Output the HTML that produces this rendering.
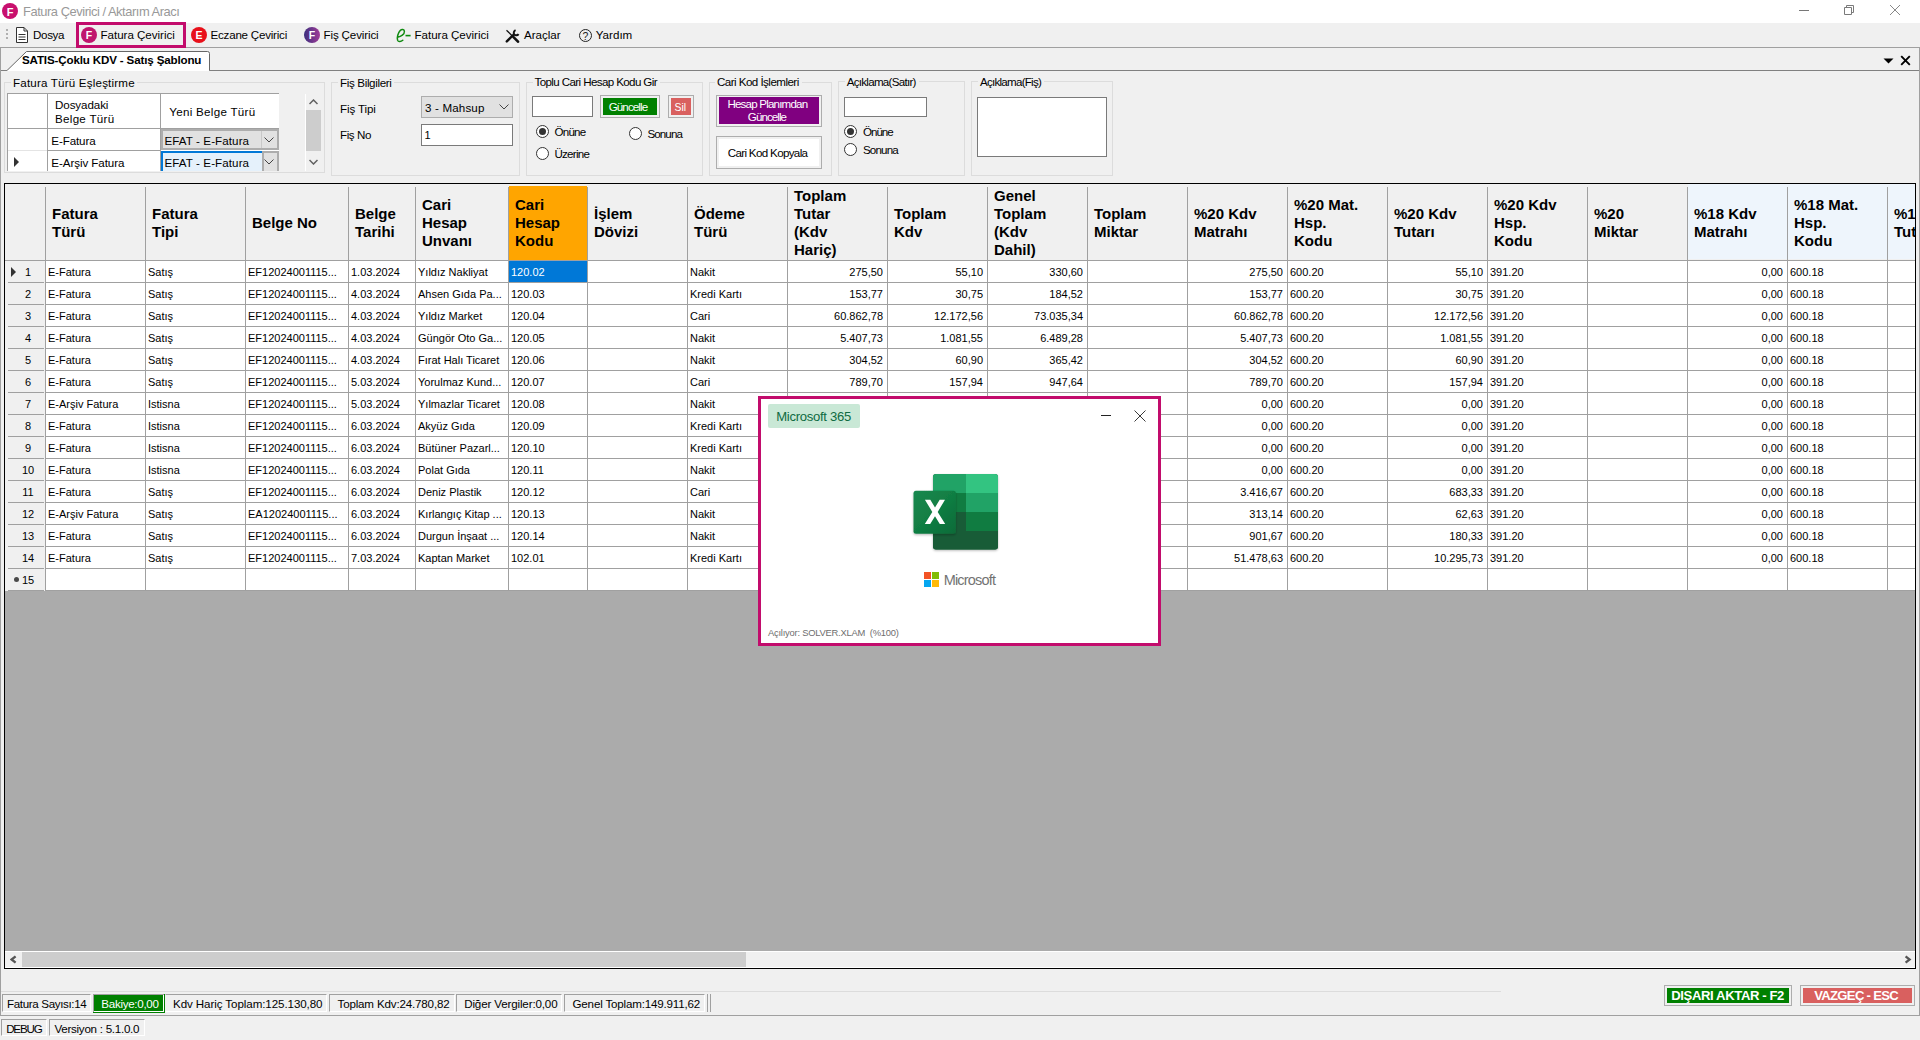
<!DOCTYPE html><html><head><meta charset="utf-8"><style>
*{box-sizing:border-box;margin:0;padding:0}
html,body{width:1920px;height:1040px;overflow:hidden;background:#f0f0f0;font-family:"Liberation Sans",sans-serif;color:#000}
.ab{position:absolute}
.t{position:absolute;white-space:nowrap;line-height:1}
</style></head><body>

<div class="ab" style="left:0px;top:0px;width:1920px;height:23px;background:#fff"></div>
<div class="ab" style="left:2px;top:3px;width:16px;height:16px;border-radius:50%;background:#c8106e"></div>
<div class="t" style="left:6.64px;top:7px;font-size:11.0px;font-weight:700;color:#fff;">F</div>
<div class="t" style="left:23.00px;top:6px;font-size:12.9px;color:#999;letter-spacing:-0.453px;">Fatura Çevirici / Aktarım Aracı</div>
<div class="ab" style="left:1799px;top:10px;width:10px;height:1px;background:#777"></div>
<svg class="ab" style="left:1843px;top:4px" width="13" height="13"><path d="M1.5 3.5H8.5V10.5H1.5Z" fill="none" stroke="#7a7a7a"/><path d="M3.5 3.5V1.5H10.5V8.5H8.5" fill="none" stroke="#7a7a7a"/></svg>
<svg class="ab" style="left:1889px;top:4px" width="12" height="12"><path d="M1 1L11 11M11 1L1 11" stroke="#7a7a7a" stroke-width="0.9"/></svg>
<div class="ab" style="left:0px;top:23px;width:1920px;height:24px;background:#f0f0f0"></div>
<div class="ab" style="left:0px;top:47px;width:1920px;height:1px;background:#a0a0a0"></div>
<div class="ab" style="left:6px;top:29px;width:2px;height:2px;background:#b0b0b0"></div>
<div class="ab" style="left:6px;top:33px;width:2px;height:2px;background:#b0b0b0"></div>
<div class="ab" style="left:6px;top:37px;width:2px;height:2px;background:#b0b0b0"></div>
<svg class="ab" style="left:15px;top:26px" width="14" height="18"><path d="M1.5 1.5H9L12.5 5V16.5H1.5Z" fill="#fff" stroke="#333" stroke-width="1"/><path d="M9 1.5V5H12.5" fill="none" stroke="#333"/><path d="M3.5 8.5H10.5M3.5 11H10.5M3.5 13.5H10.5" stroke="#333"/></svg>
<div class="t" style="left:33.00px;top:29px;font-size:11.6px;letter-spacing:-0.340px;">Dosya</div>
<div class="ab" style="left:76px;top:22px;width:110px;height:26px;border:3px solid #c20c6c"></div>
<div class="ab" style="left:81px;top:27px;width:16px;height:16px;border-radius:50%;background:#c0166e"></div>
<div class="t" style="left:85.79px;top:30px;font-size:10.5px;font-weight:700;color:#fff;">F</div>
<div class="t" style="left:100.50px;top:29px;font-size:11.6px;letter-spacing:-0.032px;">Fatura Çevirici</div>
<div class="ab" style="left:191px;top:27px;width:16px;height:16px;border-radius:50%;background:#e8101a"></div>
<div class="t" style="left:195.50px;top:30px;font-size:10.5px;font-weight:700;color:#fff;">E</div>
<div class="t" style="left:210.50px;top:29px;font-size:11.6px;letter-spacing:-0.224px;">Eczane Çevirici</div>
<div class="ab" style="left:304px;top:27px;width:16px;height:16px;border-radius:50%;background:linear-gradient(90deg,#3c2f7e,#a23c98)"></div>
<div class="t" style="left:308.79px;top:30px;font-size:10.5px;font-weight:700;color:#fff;">F</div>
<div class="t" style="left:323.50px;top:29px;font-size:11.6px;letter-spacing:-0.141px;">Fiş Çevirici</div>
<svg class="ab" style="left:395px;top:28px" width="17" height="15"><path d="M2.6 9.2C6 8.6 9.6 6.4 9.4 3.4C9.2 1.2 6.8 0.9 5.2 2.6C3 4.9 1.7 9.6 2.6 12.3C3.4 14.3 6 13.8 7.8 12.2" fill="none" stroke="#108a10" stroke-width="1.5" stroke-linecap="round"/><path d="M10.5 7.6H15.6" stroke="#108a10" stroke-width="1.6"/></svg>
<div class="t" style="left:414.50px;top:29px;font-size:11.6px;letter-spacing:-0.032px;">Fatura Çevirici</div>
<svg class="ab" style="left:505px;top:29px" width="15" height="14"><path d="M1.5 1.2L7.5 7.2" stroke="#111" stroke-width="1.3"/><path d="M8 7.7L13 12.7" stroke="#111" stroke-width="2.6" stroke-linecap="round"/><path d="M1.8 12.4L8.2 6" stroke="#111" stroke-width="2.4" stroke-linecap="round"/><path d="M10.6 1.2C8.9 1.9 8.2 3.9 9.2 5.4C10.3 6.8 12.4 6.6 13.6 5.1" fill="none" stroke="#111" stroke-width="2"/></svg>
<div class="t" style="left:524.00px;top:29px;font-size:11.6px;letter-spacing:-0.022px;">Araçlar</div>
<div class="ab" style="left:579px;top:29px;width:13px;height:13px;border:1.2px solid #222;border-radius:50%"></div>
<div class="t" style="left:582.38px;top:31px;font-size:10.5px;color:#222;">?</div>
<div class="t" style="left:595.70px;top:29px;font-size:11.6px;letter-spacing:0.017px;">Yardım</div>
<div class="ab" style="left:0px;top:48px;width:1px;height:968px;background:#a0a0a0"></div>
<div class="ab" style="left:1919px;top:48px;width:1px;height:968px;background:#a0a0a0"></div>
<div class="ab" style="left:1px;top:70px;width:1918px;height:1px;background:#808080"></div>
<svg class="ab" style="left:0;top:48px" width="215" height="24"><path d="M7 22.5 L26.5 3.5 H207.5 Q209.5 3.5 209.5 5.5 V22.5" fill="#fff" stroke="#666" stroke-width="1"/><path d="M7.5 22.5 H209" stroke="#fff" stroke-width="1.2"/></svg>
<div class="t" style="left:22.00px;top:54px;font-size:11.6px;font-weight:700;letter-spacing:-0.152px;">SATIS-Çoklu KDV - Satış Şablonu</div>
<svg class="ab" style="left:1883px;top:57px" width="12" height="8"><path d="M0.5 1.5H10.5L5.5 6.5Z" fill="#000"/></svg>
<svg class="ab" style="left:1900px;top:55px" width="11" height="11"><path d="M1.2 1.2L9.8 9.8M9.8 1.2L1.2 9.8" stroke="#000" stroke-width="1.9"/></svg>
<div class="ab" style="left:4px;top:82px;width:321px;height:91px;border:1px solid #dcdcdc"></div>
<div class="ab" style="left:11px;top:77px;width:126px;height:10px;background:#f0f0f0"></div>
<div class="t" style="left:13.00px;top:77px;font-size:11.6px;letter-spacing:0.188px;">Fatura Türü Eşleştirme</div>
<div class="ab" style="left:331px;top:82px;width:189px;height:94px;border:1px solid #dcdcdc"></div>
<div class="ab" style="left:338px;top:77px;width:56px;height:10px;background:#f0f0f0"></div>
<div class="t" style="left:340.00px;top:77px;font-size:11.6px;letter-spacing:-0.351px;">Fiş Bilgileri</div>
<div class="ab" style="left:526px;top:82px;width:177px;height:94px;border:1px solid #dcdcdc"></div>
<div class="ab" style="left:532.5px;top:77px;width:127.5px;height:10px;background:#f0f0f0"></div>
<div class="t" style="left:534.50px;top:76px;font-size:11.6px;letter-spacing:-0.617px;">Toplu Cari Hesap Kodu Gir</div>
<div class="ab" style="left:709px;top:82px;width:123px;height:94px;border:1px solid #dcdcdc"></div>
<div class="ab" style="left:715px;top:77px;width:86.5px;height:10px;background:#f0f0f0"></div>
<div class="t" style="left:717.00px;top:76px;font-size:11.6px;letter-spacing:-0.545px;">Cari Kod İşlemleri</div>
<div class="ab" style="left:838px;top:81px;width:127px;height:95px;border:1px solid #dcdcdc"></div>
<div class="ab" style="left:844.7px;top:76px;width:74px;height:10px;background:#f0f0f0"></div>
<div class="t" style="left:846.70px;top:76px;font-size:11.6px;letter-spacing:-0.723px;">Açıklama(Satır)</div>
<div class="ab" style="left:971px;top:81px;width:142px;height:95px;border:1px solid #dcdcdc"></div>
<div class="ab" style="left:978px;top:76px;width:66px;height:10px;background:#f0f0f0"></div>
<div class="t" style="left:980.00px;top:76px;font-size:11.6px;letter-spacing:-0.755px;">Açıklama(Fiş)</div>
<div class="ab" style="left:7px;top:93px;width:272px;height:78px;background:#fff;border-left:1px solid #a0a0a0;border-top:1px solid #a0a0a0"></div>
<div class="ab" style="left:8px;top:128px;width:271px;height:1px;background:#a0a0a0"></div>
<div class="ab" style="left:47px;top:150px;width:114px;height:1px;background:#a0a0a0"></div>
<div class="ab" style="left:8px;top:150px;width:39px;height:1px;background:#e4e4e4"></div>
<div class="ab" style="left:47px;top:94px;width:1px;height:77px;background:#a0a0a0"></div>
<div class="ab" style="left:160px;top:94px;width:1px;height:77px;background:#a0a0a0"></div>
<div class="t" style="left:55.00px;top:99px;font-size:11.6px;letter-spacing:-0.086px;">Dosyadaki</div>
<div class="t" style="left:55.00px;top:113px;font-size:11.6px;letter-spacing:0.292px;">Belge Türü</div>
<div class="t" style="left:169.20px;top:106px;font-size:11.6px;letter-spacing:0.292px;">Yeni Belge Türü</div>
<div class="t" style="left:51.30px;top:135px;font-size:11.6px;letter-spacing:-0.105px;">E-Fatura</div>
<div class="t" style="left:51.30px;top:157px;font-size:11.6px;letter-spacing:-0.077px;">E-Arşiv Fatura</div>
<svg class="ab" style="left:14px;top:157px" width="6" height="10"><path d="M0 0L5 5L0 10Z" fill="#333"/></svg>
<div class="ab" style="left:161px;top:129px;width:118px;height:21px;background:#e1e1e1;border:2px solid #adadad"></div>
<div class="ab" style="left:261px;top:131px;width:1px;height:17px;background:#c8c8c8"></div>
<div class="t" style="left:164.50px;top:135px;font-size:11.6px;letter-spacing:0.088px;">EFAT - E-Fatura</div>
<svg class="ab" style="left:264px;top:137px" width="10" height="6"><path d="M0.5 0.5L5 5L9.5 0.5" fill="none" stroke="#444" stroke-width="1"/></svg>
<div class="ab" style="left:161px;top:151px;width:101px;height:20px;background:#e5f1fb;border-left:2px solid #0078d7;border-top:2px solid #0078d7"></div>
<div class="ab" style="left:262px;top:151px;width:17px;height:20px;background:#e1e1e1;border-left:2px solid #adadad;border-right:2px solid #adadad;border-top:2px solid #adadad"></div>
<div class="t" style="left:164.50px;top:157px;font-size:11.6px;letter-spacing:0.088px;">EFAT - E-Fatura</div>
<svg class="ab" style="left:264px;top:159px" width="10" height="6"><path d="M0.5 0.5L5 5L9.5 0.5" fill="none" stroke="#444" stroke-width="1"/></svg>
<div class="ab" style="left:305px;top:94px;width:17px;height:77px;background:#f0f0f0;border-left:1px solid #fff"></div>
<div class="ab" style="left:306px;top:110px;width:15px;height:41px;background:#cdcdcd"></div>
<svg class="ab" style="left:309px;top:99px" width="9" height="6"><path d="M0.5 5L4.5 1L8.5 5" fill="none" stroke="#606060" stroke-width="1.5"/></svg>
<svg class="ab" style="left:309px;top:159px" width="9" height="6"><path d="M0.5 1L4.5 5L8.5 1" fill="none" stroke="#606060" stroke-width="1.5"/></svg>
<div class="t" style="left:340.00px;top:103px;font-size:11.6px;letter-spacing:-0.118px;">Fiş Tipi</div>
<div class="t" style="left:340.00px;top:129px;font-size:11.6px;letter-spacing:-0.419px;">Fiş No</div>
<div class="ab" style="left:421px;top:96px;width:92px;height:22px;background:#e1e1e1;border:1px solid #adadad"></div>
<div class="t" style="left:425.00px;top:102px;font-size:11.6px;letter-spacing:0.159px;">3 - Mahsup</div>
<svg class="ab" style="left:499px;top:104px" width="10" height="6"><path d="M0.5 0.5L5 5L9.5 0.5" fill="none" stroke="#444" stroke-width="1"/></svg>
<div class="ab" style="left:421px;top:124px;width:92px;height:22px;background:#fff;border:1px solid #7a7a7a"></div>
<div class="t" style="left:424.60px;top:130px;font-size:11.0px;">1</div>
<div class="ab" style="left:532px;top:96px;width:61px;height:21px;background:#fff;border:1px solid #7a7a7a"></div>
<div class="ab" style="left:600px;top:95px;width:60px;height:23px;background:#f0f0f0;border:1px solid #adadad"></div>
<div class="ab" style="left:603px;top:98px;width:54px;height:17px;background:#008000"></div>
<div class="t" style="left:608.70px;top:101px;font-size:11.6px;color:#fff;letter-spacing:-0.899px;">Güncelle</div>
<div class="ab" style="left:668px;top:95px;width:26px;height:23px;background:#f0f0f0;border:1px solid #adadad"></div>
<div class="ab" style="left:671px;top:98px;width:20px;height:17px;background:#d9605f"></div>
<div class="t" style="left:674.50px;top:103px;font-size:10.4px;color:#fff;">Sil</div>
<div class="ab" style="left:536.0px;top:125.0px;width:13px;height:13px;border-radius:50%;border:1px solid #333;background:#fff"></div>
<div class="ab" style="left:539.0px;top:128.0px;width:7px;height:7px;border-radius:50%;background:#333"></div>
<div class="t" style="left:554.40px;top:126px;font-size:11.6px;letter-spacing:-0.728px;">Önüne</div>
<div class="ab" style="left:629.0px;top:127.0px;width:13px;height:13px;border-radius:50%;border:1px solid #333;background:#fff"></div>
<div class="t" style="left:647.50px;top:128px;font-size:11.6px;letter-spacing:-0.918px;">Sonuna</div>
<div class="ab" style="left:536.0px;top:147.0px;width:13px;height:13px;border-radius:50%;border:1px solid #333;background:#fff"></div>
<div class="t" style="left:554.40px;top:148px;font-size:11.6px;letter-spacing:-0.745px;">Üzerine</div>
<div class="ab" style="left:716px;top:95px;width:106px;height:32px;background:#f0f0f0;border:1px solid #adadad"></div>
<div class="ab" style="left:719px;top:97px;width:100px;height:27px;background:#800080"></div>
<div class="t" style="left:727.40px;top:98px;font-size:11.6px;color:#fff;letter-spacing:-0.817px;">Hesap Planımdan</div>
<div class="t" style="left:747.80px;top:111px;font-size:11.6px;color:#fff;letter-spacing:-0.928px;">Güncelle</div>
<div class="ab" style="left:716px;top:136px;width:106px;height:33px;background:#f0f0f0;border:1px solid #adadad"></div>
<div class="ab" style="left:719px;top:139px;width:100px;height:27px;background:#fff"></div>
<div class="t" style="left:727.70px;top:147px;font-size:11.6px;letter-spacing:-0.660px;">Cari Kod Kopyala</div>
<div class="ab" style="left:844px;top:97px;width:83px;height:20px;background:#fff;border:1px solid #7a7a7a"></div>
<div class="ab" style="left:844.0px;top:125.0px;width:13px;height:13px;border-radius:50%;border:1px solid #333;background:#fff"></div>
<div class="ab" style="left:847.0px;top:128.0px;width:7px;height:7px;border-radius:50%;background:#333"></div>
<div class="t" style="left:862.90px;top:126px;font-size:11.6px;letter-spacing:-0.978px;">Önüne</div>
<div class="ab" style="left:844.0px;top:143.0px;width:13px;height:13px;border-radius:50%;border:1px solid #333;background:#fff"></div>
<div class="t" style="left:862.90px;top:144px;font-size:11.6px;letter-spacing:-0.818px;">Sonuna</div>
<div class="ab" style="left:977px;top:97px;width:130px;height:60px;background:#fff;border:1px solid #7a7a7a"></div>
<div class="ab" style="left:4px;top:183px;width:1912px;height:786px;border:1px solid #000;background:#ababab;overflow:hidden">
<div class="ab" style="left:0;top:0;width:1911px;height:76px;background:#f0f0f0"></div>
<div class="ab" style="left:41px;top:77px;width:1911px;height:330px;background:#fff"></div>
<div class="ab" style="left:0;top:77px;width:40px;height:330px;background:#f0f0f0"></div>
<div class="ab" style="left:504px;top:2px;width:78px;height:74px;background:#ffa500"></div>
<div class="ab" style="left:1683px;top:0;width:300px;height:75px;background:#eef5fc"></div>
<div class="ab" style="left:0;top:76px;width:1911px;height:1px;background:#a0a0a0"></div>
<div class="ab" style="left:40px;top:3px;width:1px;height:404px;background:#a0a0a0"></div>
<div class="ab" style="left:140px;top:3px;width:1px;height:404px;background:#a0a0a0"></div>
<div class="ab" style="left:240px;top:3px;width:1px;height:404px;background:#a0a0a0"></div>
<div class="ab" style="left:343px;top:3px;width:1px;height:404px;background:#a0a0a0"></div>
<div class="ab" style="left:410px;top:3px;width:1px;height:404px;background:#a0a0a0"></div>
<div class="ab" style="left:503px;top:3px;width:1px;height:404px;background:#a0a0a0"></div>
<div class="ab" style="left:582px;top:3px;width:1px;height:404px;background:#a0a0a0"></div>
<div class="ab" style="left:682px;top:3px;width:1px;height:404px;background:#a0a0a0"></div>
<div class="ab" style="left:782px;top:3px;width:1px;height:404px;background:#a0a0a0"></div>
<div class="ab" style="left:882px;top:3px;width:1px;height:404px;background:#a0a0a0"></div>
<div class="ab" style="left:982px;top:3px;width:1px;height:404px;background:#a0a0a0"></div>
<div class="ab" style="left:1082px;top:3px;width:1px;height:404px;background:#a0a0a0"></div>
<div class="ab" style="left:1182px;top:3px;width:1px;height:404px;background:#a0a0a0"></div>
<div class="ab" style="left:1282px;top:3px;width:1px;height:404px;background:#a0a0a0"></div>
<div class="ab" style="left:1382px;top:3px;width:1px;height:404px;background:#a0a0a0"></div>
<div class="ab" style="left:1482px;top:3px;width:1px;height:404px;background:#a0a0a0"></div>
<div class="ab" style="left:1582px;top:3px;width:1px;height:404px;background:#a0a0a0"></div>
<div class="ab" style="left:1682px;top:3px;width:1px;height:404px;background:#a0a0a0"></div>
<div class="ab" style="left:1782px;top:3px;width:1px;height:404px;background:#a0a0a0"></div>
<div class="ab" style="left:1882px;top:3px;width:1px;height:404px;background:#a0a0a0"></div>
<div class="ab" style="left:41px;top:98px;width:1911px;height:1px;background:#a0a0a0"></div>
<div class="ab" style="left:3px;top:98px;width:36px;height:1px;background:#a0a0a0"></div>
<div class="ab" style="left:41px;top:120px;width:1911px;height:1px;background:#a0a0a0"></div>
<div class="ab" style="left:3px;top:120px;width:36px;height:1px;background:#a0a0a0"></div>
<div class="ab" style="left:41px;top:142px;width:1911px;height:1px;background:#a0a0a0"></div>
<div class="ab" style="left:3px;top:142px;width:36px;height:1px;background:#a0a0a0"></div>
<div class="ab" style="left:41px;top:164px;width:1911px;height:1px;background:#a0a0a0"></div>
<div class="ab" style="left:3px;top:164px;width:36px;height:1px;background:#a0a0a0"></div>
<div class="ab" style="left:41px;top:186px;width:1911px;height:1px;background:#a0a0a0"></div>
<div class="ab" style="left:3px;top:186px;width:36px;height:1px;background:#a0a0a0"></div>
<div class="ab" style="left:41px;top:208px;width:1911px;height:1px;background:#a0a0a0"></div>
<div class="ab" style="left:3px;top:208px;width:36px;height:1px;background:#a0a0a0"></div>
<div class="ab" style="left:41px;top:230px;width:1911px;height:1px;background:#a0a0a0"></div>
<div class="ab" style="left:3px;top:230px;width:36px;height:1px;background:#a0a0a0"></div>
<div class="ab" style="left:41px;top:252px;width:1911px;height:1px;background:#a0a0a0"></div>
<div class="ab" style="left:3px;top:252px;width:36px;height:1px;background:#a0a0a0"></div>
<div class="ab" style="left:41px;top:274px;width:1911px;height:1px;background:#a0a0a0"></div>
<div class="ab" style="left:3px;top:274px;width:36px;height:1px;background:#a0a0a0"></div>
<div class="ab" style="left:41px;top:296px;width:1911px;height:1px;background:#a0a0a0"></div>
<div class="ab" style="left:3px;top:296px;width:36px;height:1px;background:#a0a0a0"></div>
<div class="ab" style="left:41px;top:318px;width:1911px;height:1px;background:#a0a0a0"></div>
<div class="ab" style="left:3px;top:318px;width:36px;height:1px;background:#a0a0a0"></div>
<div class="ab" style="left:41px;top:340px;width:1911px;height:1px;background:#a0a0a0"></div>
<div class="ab" style="left:3px;top:340px;width:36px;height:1px;background:#a0a0a0"></div>
<div class="ab" style="left:41px;top:362px;width:1911px;height:1px;background:#a0a0a0"></div>
<div class="ab" style="left:3px;top:362px;width:36px;height:1px;background:#a0a0a0"></div>
<div class="ab" style="left:41px;top:384px;width:1911px;height:1px;background:#a0a0a0"></div>
<div class="ab" style="left:3px;top:384px;width:36px;height:1px;background:#a0a0a0"></div>
<div class="ab" style="left:41px;top:406px;width:1911px;height:1px;background:#a0a0a0"></div>
<div class="ab" style="left:3px;top:406px;width:36px;height:1px;background:#a0a0a0"></div>
<div class="t" style="left:47px;top:21px;font-size:15px;font-weight:700;line-height:18px">Fatura<br>Türü</div>
<div class="t" style="left:147px;top:21px;font-size:15px;font-weight:700;line-height:18px">Fatura<br>Tipi</div>
<div class="t" style="left:247px;top:30px;font-size:15px;font-weight:700;line-height:18px">Belge No</div>
<div class="t" style="left:350px;top:21px;font-size:15px;font-weight:700;line-height:18px">Belge<br>Tarihi</div>
<div class="t" style="left:417px;top:12px;font-size:15px;font-weight:700;line-height:18px">Cari<br>Hesap<br>Unvanı</div>
<div class="t" style="left:510px;top:12px;font-size:15px;font-weight:700;line-height:18px">Cari<br>Hesap<br>Kodu</div>
<div class="t" style="left:589px;top:21px;font-size:15px;font-weight:700;line-height:18px">İşlem<br>Dövizi</div>
<div class="t" style="left:689px;top:21px;font-size:15px;font-weight:700;line-height:18px">Ödeme<br>Türü</div>
<div class="t" style="left:789px;top:3px;font-size:15px;font-weight:700;line-height:18px">Toplam<br>Tutar<br>(Kdv<br>Hariç)</div>
<div class="t" style="left:889px;top:21px;font-size:15px;font-weight:700;line-height:18px">Toplam<br>Kdv</div>
<div class="t" style="left:989px;top:3px;font-size:15px;font-weight:700;line-height:18px">Genel<br>Toplam<br>(Kdv<br>Dahil)</div>
<div class="t" style="left:1089px;top:21px;font-size:15px;font-weight:700;line-height:18px">Toplam<br>Miktar</div>
<div class="t" style="left:1189px;top:21px;font-size:15px;font-weight:700;line-height:18px">%20 Kdv<br>Matrahı</div>
<div class="t" style="left:1289px;top:12px;font-size:15px;font-weight:700;line-height:18px">%20 Mat.<br>Hsp.<br>Kodu</div>
<div class="t" style="left:1389px;top:21px;font-size:15px;font-weight:700;line-height:18px">%20 Kdv<br>Tutarı</div>
<div class="t" style="left:1489px;top:12px;font-size:15px;font-weight:700;line-height:18px">%20 Kdv<br>Hsp.<br>Kodu</div>
<div class="t" style="left:1589px;top:21px;font-size:15px;font-weight:700;line-height:18px">%20<br>Miktar</div>
<div class="t" style="left:1689px;top:21px;font-size:15px;font-weight:700;line-height:18px">%18 Kdv<br>Matrahı</div>
<div class="t" style="left:1789px;top:12px;font-size:15px;font-weight:700;line-height:18px">%18 Mat.<br>Hsp.<br>Kodu</div>
<div class="t" style="left:1889px;top:21px;font-size:15px;font-weight:700;line-height:18px">%18 Kdv<br>Tutarı</div>
<div class="ab" style="left:504px;top:77px;width:78px;height:21px;background:#0078d7"></div>
<div class="t" style="left:43px;top:83px;font-size:11px;color:#000">E-Fatura</div>
<div class="t" style="left:143px;top:83px;font-size:11px;color:#000">Satış</div>
<div class="t" style="left:243px;top:83px;font-size:11px;color:#000">EF12024001115...</div>
<div class="t" style="left:346px;top:83px;font-size:11px;color:#000">1.03.2024</div>
<div class="t" style="left:413px;top:83px;font-size:11px;color:#000">Yıldız Nakliyat</div>
<div class="t" style="left:506px;top:83px;font-size:11px;color:#fff">120.02</div>
<div class="t" style="left:685px;top:83px;font-size:11px;color:#000">Nakit</div>
<div class="t" style="left:782px;width:96px;text-align:right;top:83px;font-size:11px;color:#000">275,50</div>
<div class="t" style="left:882px;width:96px;text-align:right;top:83px;font-size:11px;color:#000">55,10</div>
<div class="t" style="left:982px;width:96px;text-align:right;top:83px;font-size:11px;color:#000">330,60</div>
<div class="t" style="left:1182px;width:96px;text-align:right;top:83px;font-size:11px;color:#000">275,50</div>
<div class="t" style="left:1285px;top:83px;font-size:11px;color:#000">600.20</div>
<div class="t" style="left:1382px;width:96px;text-align:right;top:83px;font-size:11px;color:#000">55,10</div>
<div class="t" style="left:1485px;top:83px;font-size:11px;color:#000">391.20</div>
<div class="t" style="left:1682px;width:96px;text-align:right;top:83px;font-size:11px;color:#000">0,00</div>
<div class="t" style="left:1785px;top:83px;font-size:11px;color:#000">600.18</div>
<div class="t" style="left:0px;width:46px;text-align:center;top:83px;font-size:11px">1</div>
<div class="t" style="left:43px;top:105px;font-size:11px;color:#000">E-Fatura</div>
<div class="t" style="left:143px;top:105px;font-size:11px;color:#000">Satış</div>
<div class="t" style="left:243px;top:105px;font-size:11px;color:#000">EF12024001115...</div>
<div class="t" style="left:346px;top:105px;font-size:11px;color:#000">4.03.2024</div>
<div class="t" style="left:413px;top:105px;font-size:11px;color:#000">Ahsen Gıda Pa...</div>
<div class="t" style="left:506px;top:105px;font-size:11px;color:#000">120.03</div>
<div class="t" style="left:685px;top:105px;font-size:11px;color:#000">Kredi Kartı</div>
<div class="t" style="left:782px;width:96px;text-align:right;top:105px;font-size:11px;color:#000">153,77</div>
<div class="t" style="left:882px;width:96px;text-align:right;top:105px;font-size:11px;color:#000">30,75</div>
<div class="t" style="left:982px;width:96px;text-align:right;top:105px;font-size:11px;color:#000">184,52</div>
<div class="t" style="left:1182px;width:96px;text-align:right;top:105px;font-size:11px;color:#000">153,77</div>
<div class="t" style="left:1285px;top:105px;font-size:11px;color:#000">600.20</div>
<div class="t" style="left:1382px;width:96px;text-align:right;top:105px;font-size:11px;color:#000">30,75</div>
<div class="t" style="left:1485px;top:105px;font-size:11px;color:#000">391.20</div>
<div class="t" style="left:1682px;width:96px;text-align:right;top:105px;font-size:11px;color:#000">0,00</div>
<div class="t" style="left:1785px;top:105px;font-size:11px;color:#000">600.18</div>
<div class="t" style="left:0px;width:46px;text-align:center;top:105px;font-size:11px">2</div>
<div class="t" style="left:43px;top:127px;font-size:11px;color:#000">E-Fatura</div>
<div class="t" style="left:143px;top:127px;font-size:11px;color:#000">Satış</div>
<div class="t" style="left:243px;top:127px;font-size:11px;color:#000">EF12024001115...</div>
<div class="t" style="left:346px;top:127px;font-size:11px;color:#000">4.03.2024</div>
<div class="t" style="left:413px;top:127px;font-size:11px;color:#000">Yıldız Market</div>
<div class="t" style="left:506px;top:127px;font-size:11px;color:#000">120.04</div>
<div class="t" style="left:685px;top:127px;font-size:11px;color:#000">Cari</div>
<div class="t" style="left:782px;width:96px;text-align:right;top:127px;font-size:11px;color:#000">60.862,78</div>
<div class="t" style="left:882px;width:96px;text-align:right;top:127px;font-size:11px;color:#000">12.172,56</div>
<div class="t" style="left:982px;width:96px;text-align:right;top:127px;font-size:11px;color:#000">73.035,34</div>
<div class="t" style="left:1182px;width:96px;text-align:right;top:127px;font-size:11px;color:#000">60.862,78</div>
<div class="t" style="left:1285px;top:127px;font-size:11px;color:#000">600.20</div>
<div class="t" style="left:1382px;width:96px;text-align:right;top:127px;font-size:11px;color:#000">12.172,56</div>
<div class="t" style="left:1485px;top:127px;font-size:11px;color:#000">391.20</div>
<div class="t" style="left:1682px;width:96px;text-align:right;top:127px;font-size:11px;color:#000">0,00</div>
<div class="t" style="left:1785px;top:127px;font-size:11px;color:#000">600.18</div>
<div class="t" style="left:0px;width:46px;text-align:center;top:127px;font-size:11px">3</div>
<div class="t" style="left:43px;top:149px;font-size:11px;color:#000">E-Fatura</div>
<div class="t" style="left:143px;top:149px;font-size:11px;color:#000">Satış</div>
<div class="t" style="left:243px;top:149px;font-size:11px;color:#000">EF12024001115...</div>
<div class="t" style="left:346px;top:149px;font-size:11px;color:#000">4.03.2024</div>
<div class="t" style="left:413px;top:149px;font-size:11px;color:#000">Güngör Oto Ga...</div>
<div class="t" style="left:506px;top:149px;font-size:11px;color:#000">120.05</div>
<div class="t" style="left:685px;top:149px;font-size:11px;color:#000">Nakit</div>
<div class="t" style="left:782px;width:96px;text-align:right;top:149px;font-size:11px;color:#000">5.407,73</div>
<div class="t" style="left:882px;width:96px;text-align:right;top:149px;font-size:11px;color:#000">1.081,55</div>
<div class="t" style="left:982px;width:96px;text-align:right;top:149px;font-size:11px;color:#000">6.489,28</div>
<div class="t" style="left:1182px;width:96px;text-align:right;top:149px;font-size:11px;color:#000">5.407,73</div>
<div class="t" style="left:1285px;top:149px;font-size:11px;color:#000">600.20</div>
<div class="t" style="left:1382px;width:96px;text-align:right;top:149px;font-size:11px;color:#000">1.081,55</div>
<div class="t" style="left:1485px;top:149px;font-size:11px;color:#000">391.20</div>
<div class="t" style="left:1682px;width:96px;text-align:right;top:149px;font-size:11px;color:#000">0,00</div>
<div class="t" style="left:1785px;top:149px;font-size:11px;color:#000">600.18</div>
<div class="t" style="left:0px;width:46px;text-align:center;top:149px;font-size:11px">4</div>
<div class="t" style="left:43px;top:171px;font-size:11px;color:#000">E-Fatura</div>
<div class="t" style="left:143px;top:171px;font-size:11px;color:#000">Satış</div>
<div class="t" style="left:243px;top:171px;font-size:11px;color:#000">EF12024001115...</div>
<div class="t" style="left:346px;top:171px;font-size:11px;color:#000">4.03.2024</div>
<div class="t" style="left:413px;top:171px;font-size:11px;color:#000">Fırat Halı Ticaret</div>
<div class="t" style="left:506px;top:171px;font-size:11px;color:#000">120.06</div>
<div class="t" style="left:685px;top:171px;font-size:11px;color:#000">Nakit</div>
<div class="t" style="left:782px;width:96px;text-align:right;top:171px;font-size:11px;color:#000">304,52</div>
<div class="t" style="left:882px;width:96px;text-align:right;top:171px;font-size:11px;color:#000">60,90</div>
<div class="t" style="left:982px;width:96px;text-align:right;top:171px;font-size:11px;color:#000">365,42</div>
<div class="t" style="left:1182px;width:96px;text-align:right;top:171px;font-size:11px;color:#000">304,52</div>
<div class="t" style="left:1285px;top:171px;font-size:11px;color:#000">600.20</div>
<div class="t" style="left:1382px;width:96px;text-align:right;top:171px;font-size:11px;color:#000">60,90</div>
<div class="t" style="left:1485px;top:171px;font-size:11px;color:#000">391.20</div>
<div class="t" style="left:1682px;width:96px;text-align:right;top:171px;font-size:11px;color:#000">0,00</div>
<div class="t" style="left:1785px;top:171px;font-size:11px;color:#000">600.18</div>
<div class="t" style="left:0px;width:46px;text-align:center;top:171px;font-size:11px">5</div>
<div class="t" style="left:43px;top:193px;font-size:11px;color:#000">E-Fatura</div>
<div class="t" style="left:143px;top:193px;font-size:11px;color:#000">Satış</div>
<div class="t" style="left:243px;top:193px;font-size:11px;color:#000">EF12024001115...</div>
<div class="t" style="left:346px;top:193px;font-size:11px;color:#000">5.03.2024</div>
<div class="t" style="left:413px;top:193px;font-size:11px;color:#000">Yorulmaz Kund...</div>
<div class="t" style="left:506px;top:193px;font-size:11px;color:#000">120.07</div>
<div class="t" style="left:685px;top:193px;font-size:11px;color:#000">Cari</div>
<div class="t" style="left:782px;width:96px;text-align:right;top:193px;font-size:11px;color:#000">789,70</div>
<div class="t" style="left:882px;width:96px;text-align:right;top:193px;font-size:11px;color:#000">157,94</div>
<div class="t" style="left:982px;width:96px;text-align:right;top:193px;font-size:11px;color:#000">947,64</div>
<div class="t" style="left:1182px;width:96px;text-align:right;top:193px;font-size:11px;color:#000">789,70</div>
<div class="t" style="left:1285px;top:193px;font-size:11px;color:#000">600.20</div>
<div class="t" style="left:1382px;width:96px;text-align:right;top:193px;font-size:11px;color:#000">157,94</div>
<div class="t" style="left:1485px;top:193px;font-size:11px;color:#000">391.20</div>
<div class="t" style="left:1682px;width:96px;text-align:right;top:193px;font-size:11px;color:#000">0,00</div>
<div class="t" style="left:1785px;top:193px;font-size:11px;color:#000">600.18</div>
<div class="t" style="left:0px;width:46px;text-align:center;top:193px;font-size:11px">6</div>
<div class="t" style="left:43px;top:215px;font-size:11px;color:#000">E-Arşiv Fatura</div>
<div class="t" style="left:143px;top:215px;font-size:11px;color:#000">Istisna</div>
<div class="t" style="left:243px;top:215px;font-size:11px;color:#000">EF12024001115...</div>
<div class="t" style="left:346px;top:215px;font-size:11px;color:#000">5.03.2024</div>
<div class="t" style="left:413px;top:215px;font-size:11px;color:#000">Yılmazlar Ticaret</div>
<div class="t" style="left:506px;top:215px;font-size:11px;color:#000">120.08</div>
<div class="t" style="left:685px;top:215px;font-size:11px;color:#000">Nakit</div>
<div class="t" style="left:782px;width:96px;text-align:right;top:215px;font-size:11px;color:#000">0,00</div>
<div class="t" style="left:882px;width:96px;text-align:right;top:215px;font-size:11px;color:#000">0,00</div>
<div class="t" style="left:982px;width:96px;text-align:right;top:215px;font-size:11px;color:#000">0,00</div>
<div class="t" style="left:1182px;width:96px;text-align:right;top:215px;font-size:11px;color:#000">0,00</div>
<div class="t" style="left:1285px;top:215px;font-size:11px;color:#000">600.20</div>
<div class="t" style="left:1382px;width:96px;text-align:right;top:215px;font-size:11px;color:#000">0,00</div>
<div class="t" style="left:1485px;top:215px;font-size:11px;color:#000">391.20</div>
<div class="t" style="left:1682px;width:96px;text-align:right;top:215px;font-size:11px;color:#000">0,00</div>
<div class="t" style="left:1785px;top:215px;font-size:11px;color:#000">600.18</div>
<div class="t" style="left:0px;width:46px;text-align:center;top:215px;font-size:11px">7</div>
<div class="t" style="left:43px;top:237px;font-size:11px;color:#000">E-Fatura</div>
<div class="t" style="left:143px;top:237px;font-size:11px;color:#000">Istisna</div>
<div class="t" style="left:243px;top:237px;font-size:11px;color:#000">EF12024001115...</div>
<div class="t" style="left:346px;top:237px;font-size:11px;color:#000">6.03.2024</div>
<div class="t" style="left:413px;top:237px;font-size:11px;color:#000">Akyüz Gıda</div>
<div class="t" style="left:506px;top:237px;font-size:11px;color:#000">120.09</div>
<div class="t" style="left:685px;top:237px;font-size:11px;color:#000">Kredi Kartı</div>
<div class="t" style="left:782px;width:96px;text-align:right;top:237px;font-size:11px;color:#000">0,00</div>
<div class="t" style="left:882px;width:96px;text-align:right;top:237px;font-size:11px;color:#000">0,00</div>
<div class="t" style="left:982px;width:96px;text-align:right;top:237px;font-size:11px;color:#000">0,00</div>
<div class="t" style="left:1182px;width:96px;text-align:right;top:237px;font-size:11px;color:#000">0,00</div>
<div class="t" style="left:1285px;top:237px;font-size:11px;color:#000">600.20</div>
<div class="t" style="left:1382px;width:96px;text-align:right;top:237px;font-size:11px;color:#000">0,00</div>
<div class="t" style="left:1485px;top:237px;font-size:11px;color:#000">391.20</div>
<div class="t" style="left:1682px;width:96px;text-align:right;top:237px;font-size:11px;color:#000">0,00</div>
<div class="t" style="left:1785px;top:237px;font-size:11px;color:#000">600.18</div>
<div class="t" style="left:0px;width:46px;text-align:center;top:237px;font-size:11px">8</div>
<div class="t" style="left:43px;top:259px;font-size:11px;color:#000">E-Fatura</div>
<div class="t" style="left:143px;top:259px;font-size:11px;color:#000">Istisna</div>
<div class="t" style="left:243px;top:259px;font-size:11px;color:#000">EF12024001115...</div>
<div class="t" style="left:346px;top:259px;font-size:11px;color:#000">6.03.2024</div>
<div class="t" style="left:413px;top:259px;font-size:11px;color:#000">Bütüner Pazarl...</div>
<div class="t" style="left:506px;top:259px;font-size:11px;color:#000">120.10</div>
<div class="t" style="left:685px;top:259px;font-size:11px;color:#000">Kredi Kartı</div>
<div class="t" style="left:782px;width:96px;text-align:right;top:259px;font-size:11px;color:#000">0,00</div>
<div class="t" style="left:882px;width:96px;text-align:right;top:259px;font-size:11px;color:#000">0,00</div>
<div class="t" style="left:982px;width:96px;text-align:right;top:259px;font-size:11px;color:#000">0,00</div>
<div class="t" style="left:1182px;width:96px;text-align:right;top:259px;font-size:11px;color:#000">0,00</div>
<div class="t" style="left:1285px;top:259px;font-size:11px;color:#000">600.20</div>
<div class="t" style="left:1382px;width:96px;text-align:right;top:259px;font-size:11px;color:#000">0,00</div>
<div class="t" style="left:1485px;top:259px;font-size:11px;color:#000">391.20</div>
<div class="t" style="left:1682px;width:96px;text-align:right;top:259px;font-size:11px;color:#000">0,00</div>
<div class="t" style="left:1785px;top:259px;font-size:11px;color:#000">600.18</div>
<div class="t" style="left:0px;width:46px;text-align:center;top:259px;font-size:11px">9</div>
<div class="t" style="left:43px;top:281px;font-size:11px;color:#000">E-Fatura</div>
<div class="t" style="left:143px;top:281px;font-size:11px;color:#000">Istisna</div>
<div class="t" style="left:243px;top:281px;font-size:11px;color:#000">EF12024001115...</div>
<div class="t" style="left:346px;top:281px;font-size:11px;color:#000">6.03.2024</div>
<div class="t" style="left:413px;top:281px;font-size:11px;color:#000">Polat Gıda</div>
<div class="t" style="left:506px;top:281px;font-size:11px;color:#000">120.11</div>
<div class="t" style="left:685px;top:281px;font-size:11px;color:#000">Nakit</div>
<div class="t" style="left:782px;width:96px;text-align:right;top:281px;font-size:11px;color:#000">0,00</div>
<div class="t" style="left:882px;width:96px;text-align:right;top:281px;font-size:11px;color:#000">0,00</div>
<div class="t" style="left:982px;width:96px;text-align:right;top:281px;font-size:11px;color:#000">0,00</div>
<div class="t" style="left:1182px;width:96px;text-align:right;top:281px;font-size:11px;color:#000">0,00</div>
<div class="t" style="left:1285px;top:281px;font-size:11px;color:#000">600.20</div>
<div class="t" style="left:1382px;width:96px;text-align:right;top:281px;font-size:11px;color:#000">0,00</div>
<div class="t" style="left:1485px;top:281px;font-size:11px;color:#000">391.20</div>
<div class="t" style="left:1682px;width:96px;text-align:right;top:281px;font-size:11px;color:#000">0,00</div>
<div class="t" style="left:1785px;top:281px;font-size:11px;color:#000">600.18</div>
<div class="t" style="left:0px;width:46px;text-align:center;top:281px;font-size:11px">10</div>
<div class="t" style="left:43px;top:303px;font-size:11px;color:#000">E-Fatura</div>
<div class="t" style="left:143px;top:303px;font-size:11px;color:#000">Satış</div>
<div class="t" style="left:243px;top:303px;font-size:11px;color:#000">EF12024001115...</div>
<div class="t" style="left:346px;top:303px;font-size:11px;color:#000">6.03.2024</div>
<div class="t" style="left:413px;top:303px;font-size:11px;color:#000">Deniz Plastik</div>
<div class="t" style="left:506px;top:303px;font-size:11px;color:#000">120.12</div>
<div class="t" style="left:685px;top:303px;font-size:11px;color:#000">Cari</div>
<div class="t" style="left:782px;width:96px;text-align:right;top:303px;font-size:11px;color:#000">3.416,67</div>
<div class="t" style="left:882px;width:96px;text-align:right;top:303px;font-size:11px;color:#000">683,33</div>
<div class="t" style="left:982px;width:96px;text-align:right;top:303px;font-size:11px;color:#000">4.100,00</div>
<div class="t" style="left:1182px;width:96px;text-align:right;top:303px;font-size:11px;color:#000">3.416,67</div>
<div class="t" style="left:1285px;top:303px;font-size:11px;color:#000">600.20</div>
<div class="t" style="left:1382px;width:96px;text-align:right;top:303px;font-size:11px;color:#000">683,33</div>
<div class="t" style="left:1485px;top:303px;font-size:11px;color:#000">391.20</div>
<div class="t" style="left:1682px;width:96px;text-align:right;top:303px;font-size:11px;color:#000">0,00</div>
<div class="t" style="left:1785px;top:303px;font-size:11px;color:#000">600.18</div>
<div class="t" style="left:0px;width:46px;text-align:center;top:303px;font-size:11px">11</div>
<div class="t" style="left:43px;top:325px;font-size:11px;color:#000">E-Arşiv Fatura</div>
<div class="t" style="left:143px;top:325px;font-size:11px;color:#000">Satış</div>
<div class="t" style="left:243px;top:325px;font-size:11px;color:#000">EA12024001115...</div>
<div class="t" style="left:346px;top:325px;font-size:11px;color:#000">6.03.2024</div>
<div class="t" style="left:413px;top:325px;font-size:11px;color:#000">Kırlangıç Kitap ...</div>
<div class="t" style="left:506px;top:325px;font-size:11px;color:#000">120.13</div>
<div class="t" style="left:685px;top:325px;font-size:11px;color:#000">Nakit</div>
<div class="t" style="left:782px;width:96px;text-align:right;top:325px;font-size:11px;color:#000">313,14</div>
<div class="t" style="left:882px;width:96px;text-align:right;top:325px;font-size:11px;color:#000">62,63</div>
<div class="t" style="left:982px;width:96px;text-align:right;top:325px;font-size:11px;color:#000">375,77</div>
<div class="t" style="left:1182px;width:96px;text-align:right;top:325px;font-size:11px;color:#000">313,14</div>
<div class="t" style="left:1285px;top:325px;font-size:11px;color:#000">600.20</div>
<div class="t" style="left:1382px;width:96px;text-align:right;top:325px;font-size:11px;color:#000">62,63</div>
<div class="t" style="left:1485px;top:325px;font-size:11px;color:#000">391.20</div>
<div class="t" style="left:1682px;width:96px;text-align:right;top:325px;font-size:11px;color:#000">0,00</div>
<div class="t" style="left:1785px;top:325px;font-size:11px;color:#000">600.18</div>
<div class="t" style="left:0px;width:46px;text-align:center;top:325px;font-size:11px">12</div>
<div class="t" style="left:43px;top:347px;font-size:11px;color:#000">E-Fatura</div>
<div class="t" style="left:143px;top:347px;font-size:11px;color:#000">Satış</div>
<div class="t" style="left:243px;top:347px;font-size:11px;color:#000">EF12024001115...</div>
<div class="t" style="left:346px;top:347px;font-size:11px;color:#000">6.03.2024</div>
<div class="t" style="left:413px;top:347px;font-size:11px;color:#000">Durgun İnşaat ...</div>
<div class="t" style="left:506px;top:347px;font-size:11px;color:#000">120.14</div>
<div class="t" style="left:685px;top:347px;font-size:11px;color:#000">Nakit</div>
<div class="t" style="left:782px;width:96px;text-align:right;top:347px;font-size:11px;color:#000">901,67</div>
<div class="t" style="left:882px;width:96px;text-align:right;top:347px;font-size:11px;color:#000">180,33</div>
<div class="t" style="left:982px;width:96px;text-align:right;top:347px;font-size:11px;color:#000">1.082,00</div>
<div class="t" style="left:1182px;width:96px;text-align:right;top:347px;font-size:11px;color:#000">901,67</div>
<div class="t" style="left:1285px;top:347px;font-size:11px;color:#000">600.20</div>
<div class="t" style="left:1382px;width:96px;text-align:right;top:347px;font-size:11px;color:#000">180,33</div>
<div class="t" style="left:1485px;top:347px;font-size:11px;color:#000">391.20</div>
<div class="t" style="left:1682px;width:96px;text-align:right;top:347px;font-size:11px;color:#000">0,00</div>
<div class="t" style="left:1785px;top:347px;font-size:11px;color:#000">600.18</div>
<div class="t" style="left:0px;width:46px;text-align:center;top:347px;font-size:11px">13</div>
<div class="t" style="left:43px;top:369px;font-size:11px;color:#000">E-Fatura</div>
<div class="t" style="left:143px;top:369px;font-size:11px;color:#000">Satış</div>
<div class="t" style="left:243px;top:369px;font-size:11px;color:#000">EF12024001115...</div>
<div class="t" style="left:346px;top:369px;font-size:11px;color:#000">7.03.2024</div>
<div class="t" style="left:413px;top:369px;font-size:11px;color:#000">Kaptan Market</div>
<div class="t" style="left:506px;top:369px;font-size:11px;color:#000">102.01</div>
<div class="t" style="left:685px;top:369px;font-size:11px;color:#000">Kredi Kartı</div>
<div class="t" style="left:782px;width:96px;text-align:right;top:369px;font-size:11px;color:#000">51.478,63</div>
<div class="t" style="left:882px;width:96px;text-align:right;top:369px;font-size:11px;color:#000">10.295,73</div>
<div class="t" style="left:982px;width:96px;text-align:right;top:369px;font-size:11px;color:#000">61.774,36</div>
<div class="t" style="left:1182px;width:96px;text-align:right;top:369px;font-size:11px;color:#000">51.478,63</div>
<div class="t" style="left:1285px;top:369px;font-size:11px;color:#000">600.20</div>
<div class="t" style="left:1382px;width:96px;text-align:right;top:369px;font-size:11px;color:#000">10.295,73</div>
<div class="t" style="left:1485px;top:369px;font-size:11px;color:#000">391.20</div>
<div class="t" style="left:1682px;width:96px;text-align:right;top:369px;font-size:11px;color:#000">0,00</div>
<div class="t" style="left:1785px;top:369px;font-size:11px;color:#000">600.18</div>
<div class="t" style="left:0px;width:46px;text-align:center;top:369px;font-size:11px">14</div>
<div class="t" style="left:0px;width:46px;text-align:center;top:391px;font-size:11px">15</div>
<svg class="ab" style="left:6px;top:83px" width="6" height="10"><path d="M0 0L5 5L0 10Z" fill="#333"/></svg>
<div class="ab" style="left:8.5px;top:393px;width:5px;height:5px;border-radius:50%;background:#4a4a4a"></div>
<div class="ab" style="left:0;top:767px;width:1911px;height:17px;background:#f0f0f0;border-top:1px solid #fff;border-bottom:1px solid #fff"></div>
<div class="ab" style="left:17px;top:768px;width:724px;height:15px;background:#cdcdcd"></div>
<svg class="ab" style="left:5px;top:771px" width="8" height="10"><path d="M5.6 1.3L1.6 4.5L5.6 7.7" fill="none" stroke="#555" stroke-width="2.3"/></svg>
<svg class="ab" style="left:1899px;top:771px" width="8" height="10"><path d="M1.6 1.3L5.6 4.5L1.6 7.7" fill="none" stroke="#555" stroke-width="2.3"/></svg>
</div>
<div class="ab" style="left:1px;top:991px;width:1500px;height:1px;background:#dcdcdc"></div>
<div class="ab" style="left:0px;top:1015px;width:1920px;height:1px;background:#a0a0a0"></div>
<div class="ab" style="left:2px;top:994px;width:89px;height:18px;border-left:1px solid #a0a0a0;border-top:1px solid #a0a0a0;border-right:1px solid #fff;border-bottom:1px solid #fff"></div>
<div class="t" style="left:7.00px;top:998px;font-size:11.6px;letter-spacing:-0.354px;">Fatura Sayısı:14</div>
<div class="ab" style="left:93px;top:994px;width:72px;height:19px;background:#008000"></div>
<div class="ab" style="left:93px;top:994px;width:71px;height:1px;background:#a0a0a0"></div>
<div class="ab" style="left:93px;top:994px;width:1px;height:18px;background:#a0a0a0"></div>
<div class="ab" style="left:94px;top:1011px;width:70px;height:1px;background:#fff"></div>
<div class="ab" style="left:163px;top:995px;width:1px;height:17px;background:#fff"></div>
<div class="t" style="left:101.30px;top:998px;font-size:11.6px;color:#fff;letter-spacing:-0.296px;">Bakiye:0,00</div>
<div class="ab" style="left:165px;top:994px;width:162px;height:18px;border-left:1px solid #f0f0f0;border-top:1px solid #a0a0a0;border-right:1px solid #fff;border-bottom:1px solid #fff"></div>
<div class="t" style="left:173.00px;top:998px;font-size:11.6px;letter-spacing:-0.090px;">Kdv Hariç Toplam:125.130,80</div>
<div class="ab" style="left:329px;top:994px;width:126px;height:18px;border-left:1px solid #a0a0a0;border-top:1px solid #a0a0a0;border-right:1px solid #fff;border-bottom:1px solid #fff"></div>
<div class="t" style="left:337.50px;top:998px;font-size:11.6px;letter-spacing:-0.169px;">Toplam Kdv:24.780,82</div>
<div class="ab" style="left:456px;top:994px;width:106px;height:18px;border-left:1px solid #a0a0a0;border-top:1px solid #a0a0a0;border-right:1px solid #fff;border-bottom:1px solid #fff"></div>
<div class="t" style="left:464.20px;top:998px;font-size:11.6px;letter-spacing:-0.145px;">Diğer Vergiler:0,00</div>
<div class="ab" style="left:564px;top:994px;width:141px;height:18px;border-left:1px solid #a0a0a0;border-top:1px solid #a0a0a0;border-right:1px solid #fff;border-bottom:1px solid #fff"></div>
<div class="t" style="left:572.50px;top:998px;font-size:11.6px;letter-spacing:-0.177px;">Genel Toplam:149.911,62</div>
<div class="ab" style="left:707px;top:994px;width:1px;height:18px;background:#a0a0a0"></div>
<div class="ab" style="left:710px;top:994px;width:1px;height:18px;background:#a0a0a0"></div>
<div class="ab" style="left:1px;top:1019px;width:46px;height:17px;border-left:1px solid #a0a0a0;border-top:1px solid #a0a0a0;border-right:1px solid #fff;border-bottom:1px solid #fff"></div>
<div class="t" style="left:6.20px;top:1023px;font-size:11.6px;letter-spacing:-1.188px;">DEBUG</div>
<div class="ab" style="left:49px;top:1019px;width:96px;height:17px;border-left:1px solid #a0a0a0;border-top:1px solid #a0a0a0;border-right:1px solid #fff;border-bottom:1px solid #fff"></div>
<div class="t" style="left:54.40px;top:1023px;font-size:11.6px;letter-spacing:-0.262px;">Versiyon : 5.1.0.0</div>
<div class="ab" style="left:1664px;top:985px;width:128px;height:21px;border:1px solid #adadad;background:#f0f0f0"></div>
<div class="ab" style="left:1667px;top:988px;width:122px;height:15px;background:#008000"></div>
<div class="t" style="left:1671.30px;top:989px;font-size:13.1px;font-weight:700;color:#fff;letter-spacing:-0.387px;">DIŞARI AKTAR - F2</div>
<div class="ab" style="left:1665px;top:1003px;width:126px;height:2px;background:#f0f0f0"></div>
<div class="ab" style="left:1800px;top:985px;width:115px;height:21px;border:1px solid #adadad;background:#f0f0f0"></div>
<div class="ab" style="left:1803px;top:988px;width:109px;height:15px;background:#d9605f"></div>
<div class="t" style="left:1814.20px;top:989px;font-size:13.1px;font-weight:700;color:#fff;letter-spacing:-0.688px;">VAZGEÇ - ESC</div>
<div class="ab" style="left:1801px;top:1003px;width:113px;height:2px;background:#f0f0f0"></div>
<div class="ab" style="left:758px;top:396px;width:403px;height:250px;border:3px solid #c20c6c;background:#fff"></div>
<div class="ab" style="left:768px;top:404px;width:92px;height:24px;border-radius:2px;background:#c9e8d6"></div>
<div class="t" style="left:776.20px;top:410px;font-size:13.1px;color:#0f6b42;letter-spacing:-0.294px;">Microsoft 365</div>
<div class="ab" style="left:1101px;top:415px;width:10px;height:1px;background:#222"></div>
<svg class="ab" style="left:1134px;top:410px" width="12" height="12"><path d="M0.5 0.5L11.5 11.5M11.5 0.5L0.5 11.5" stroke="#222" stroke-width="0.9"/></svg>
<svg class="ab" style="left:910px;top:472px" width="92" height="84" viewBox="0 0 92 84">
<defs>
<filter id="sh" x="-20%" y="-20%" width="140%" height="140%"><feDropShadow dx="0" dy="1.2" stdDeviation="1.1" flood-opacity="0.28"/></filter>
<clipPath id="cp"><rect x="23" y="2" width="65" height="75.5" rx="3"/></clipPath>
<linearGradient id="fg" x1="0" y1="0" x2="1" y2="1"><stop offset="0" stop-color="#18884f"/><stop offset="0.5" stop-color="#117e43"/><stop offset="1" stop-color="#0b6a38"/></linearGradient>
</defs>
<g filter="url(#sh)"><rect x="23" y="2" width="65" height="75.5" rx="3" fill="#185c37"/></g>
<g clip-path="url(#cp)">
<rect x="23" y="2" width="33" height="19" fill="#21a366"/>
<rect x="56" y="2" width="32" height="19" fill="#33c481"/>
<rect x="23" y="21" width="33" height="19" fill="#107c41"/>
<rect x="56" y="21" width="32" height="19" fill="#21a366"/>
<rect x="23" y="40" width="33" height="19" fill="#185c37"/>
<rect x="56" y="40" width="32" height="19" fill="#107c41"/>
<rect x="23" y="59" width="65" height="19" fill="#185c37"/>
</g>
<g filter="url(#sh)"><rect x="3.5" y="18.7" width="42.4" height="43.1" rx="2.5" fill="url(#fg)"/></g>
<path d="M14.9 27.8H20.3L25 35.4L29.7 27.8H35L27.7 39.9L35.2 52H29.8L25 44.2L20.2 52H14.8L22.3 39.9Z" fill="#fff"/>
</svg>
<div class="ab" style="left:924px;top:572px;width:7px;height:7px;background:#f35325"></div>
<div class="ab" style="left:932px;top:572px;width:7px;height:7px;background:#81bc06"></div>
<div class="ab" style="left:924px;top:580px;width:7px;height:7px;background:#05a6f0"></div>
<div class="ab" style="left:932px;top:580px;width:7px;height:7px;background:#ffba08"></div>
<div class="t" style="left:943.70px;top:573px;font-size:14.5px;color:#737373;letter-spacing:-0.807px;">Microsoft</div>
<div class="t" style="left:768.00px;top:628px;font-size:9.4px;color:#6e6e6e;letter-spacing:-0.230px;">Açılıyor: SOLVER.XLAM&nbsp; (%100)</div>
</body></html>
